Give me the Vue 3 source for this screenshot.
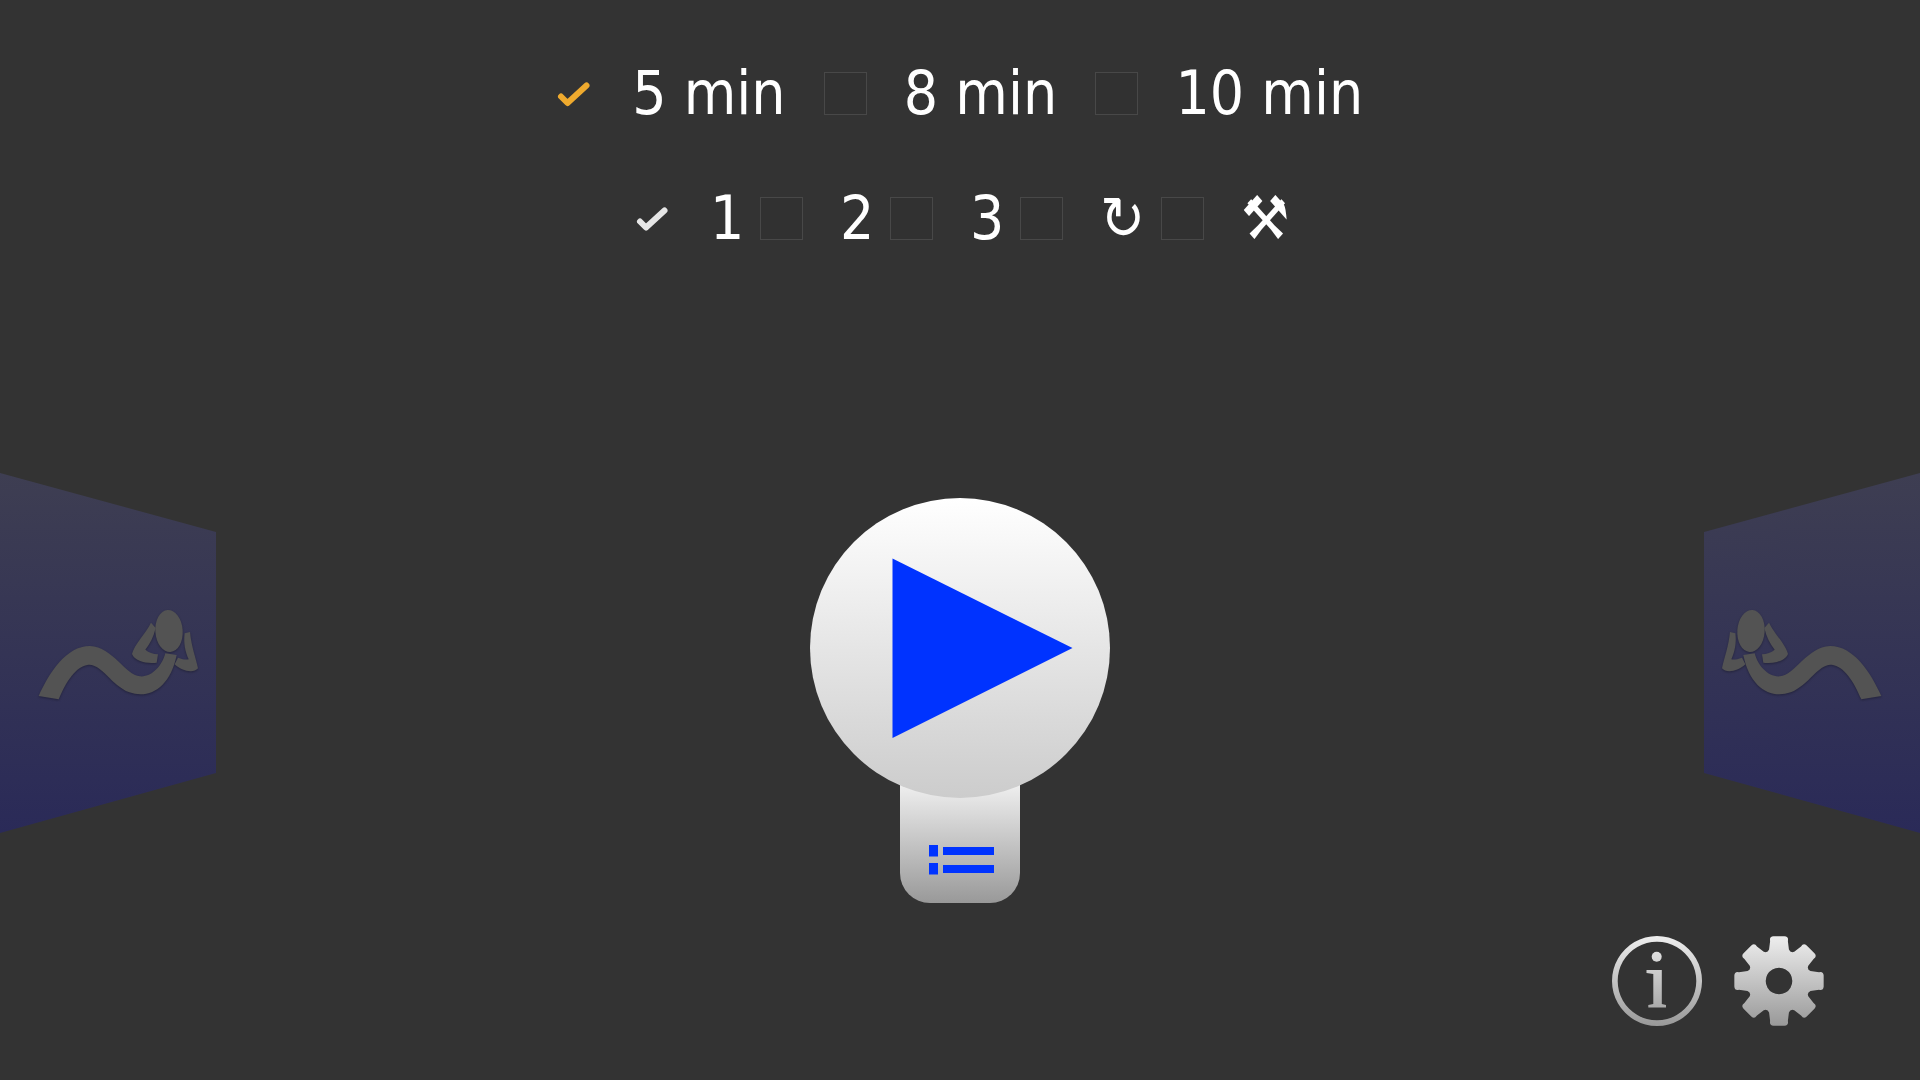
<template>
  <div class="screen">
    <div class="options">
      <div class="row row-time">
        <template v-for="t in times" :key="t.label">
          <span class="box" :class="{ checked: t.checked }">
            <svg v-if="t.checked" class="tick" viewBox="0 0 43 43"><path d="M9 24.5 L15.5 31 L34.5 13.5" fill="none" stroke="#efaa2e" stroke-width="6" stroke-linejoin="round" stroke-linecap="round" /></svg>
          </span>
          <span class="label">{{ t.label }}</span>
        </template>
      </div>
      <div class="row row-level">
        <template v-for="l in levels" :key="l.label">
          <span class="box" :class="{ checked: l.checked }">
            <svg v-if="l.checked" class="tick" viewBox="0 0 43 43"><path d="M10 24.5 L16 30.5 L34.5 13.5" fill="none" stroke="#e6e6e6" stroke-width="6" stroke-linejoin="round" stroke-linecap="round" /></svg>
          </span>
          <span class="label">{{ l.label }}</span>
        </template>
      </div>
    </div>

    <div class="stage">
      <div class="panel">
        <svg class="situp" viewBox="0 0 690 1140">
          <path :d="bodyPath" />
          <path :d="armLeft" />
          <path :d="armRight" />
          <ellipse cx="507" cy="513" rx="41" ry="63" transform="rotate(-4 507 513)" />
        </svg>
      </div>

      <div class="center">
        <button class="play">
          <svg width="300" height="300" viewBox="0 0 300 300"><polygon points="82.5,60.5 262.5,150 82.5,240" fill="#0033ff" /></svg>
        </button>
        <div class="tab">
          <svg width="66" height="30" viewBox="0 0 66 30">
            <g fill="#0033ff">
              <rect x="0" y="0" width="9" height="11.5" />
              <rect x="0" y="18" width="9" height="11.5" />
              <rect x="14" y="2" width="51" height="8" />
              <rect x="14" y="20" width="51" height="8" />
            </g>
          </svg>
        </div>
      </div>

      <div class="panel flipped">
        <svg class="situp" viewBox="0 0 690 1140">
          <path :d="bodyPath" />
          <path :d="armLeft" />
          <path :d="armRight" />
          <ellipse cx="507" cy="513" rx="41" ry="63" transform="rotate(-4 507 513)" />
        </svg>
      </div>
    </div>

    <div class="footer">
      <svg width="90" height="90" viewBox="0 0 90 90">
        <defs>
          <linearGradient id="infoGrad" x1="0" y1="0" x2="0" y2="90" gradientUnits="userSpaceOnUse">
            <stop offset="0" stop-color="#eeeeee" />
            <stop offset="1" stop-color="#999999" />
          </linearGradient>
        </defs>
        <path d="M45 0a45 45 0 1 0 0.01 0zM45 5.7a39.3 39.3 0 1 1 -0.01 0z" fill="url(#infoGrad)" fill-rule="evenodd" />
        <circle cx="44.7" cy="20.7" r="5" fill="url(#infoGrad)" />
        <path d="M34.5 34 H49.8 V68 L54 69 V71.5 H36.3 V69 L41.3 68 V38 L34.5 37 Z" fill="url(#infoGrad)" />
      </svg>
      <svg width="90" height="90" viewBox="0 0 90 90">
        <defs>
          <linearGradient id="gearGrad" x1="0" y1="0" x2="0" y2="90" gradientUnits="userSpaceOnUse">
            <stop offset="0" stop-color="#eeeeee" />
            <stop offset="1" stop-color="#999999" />
          </linearGradient>
        </defs>
        <path :d="gearPath" fill="url(#gearGrad)" fill-rule="evenodd" />
      </svg>
    </div>
  </div>
</template>

<script setup>
const times = [
  { label: '5 min', checked: true },
  { label: '8 min', checked: false },
  { label: '10 min', checked: false }
]

const levels = [
  { label: '1', checked: true },
  { label: '2', checked: false },
  { label: '3', checked: false },
  { label: '↻', checked: false },
  { label: '⚒', checked: false }
]

// figure traced in 3x coordinates of the side panel
const bodyPath = 'M116 708 L176 718 C198 665 228 618 265 614 C305 611 332 674 388 697 C448 718 510 684 530 585 L496 580 C486 618 455 652 420 649 C376 646 338 560 270 558 C198 558 148 638 116 708 Z'
const armLeft = 'M453 488 L467 504 C461 530 450 552 436 569 C446 578 460 582 474 583 L470 608 C440 612 405 604 396 582 C403 553 438 520 453 488 Z'
const armRight = 'M554 520 L570 516 C574 560 588 595 594 625 C580 642 543 632 524 613 L534 593 C548 598 558 600 566 598 C556 576 550 550 554 520 Z'

// 8 teeth around a centre hole
const gearPath = (() => {
  const c = 45
  const pt = (r, deg) => {
    const a = (deg - 90) * Math.PI / 180
    return `${(c + r * Math.cos(a)).toFixed(2)} ${(c + r * Math.sin(a)).toFixed(2)}`
  }
  let d = ''
  for (let i = 0; i < 8; i++) {
    const a = i * 45
    d += `${i ? 'Q' + pt(30, a - 22.5) + ' ' : 'M'}${pt(33, a - 17.5)} L${pt(41, a - 12.5)} Q${pt(45.5, a - 12.5)} ${pt(45, a - 7)} L${pt(45, a + 7)} Q${pt(45.5, a + 12.5)} ${pt(41, a + 12.5)} L${pt(33, a + 17.5)} `
  }
  d += `Q${pt(30, -22.5)} ${pt(33, -17.5)} Z `
  d += 'M45 31.7a13.3 13.3 0 1 0 0.01 0z'
  return d
})()
</script>

<style scoped>
.screen {
  width: 1920px;
  height: 1080px;
  overflow: hidden;
  background: #333333;
  font-family: "DejaVu Sans", Verdana, sans-serif;
  font-stretch: condensed;
  color: #ffffff;
}

.options {
  display: flex;
  flex-direction: column;
  align-items: flex-start;
  padding-top: 72px;
  gap: 82px;
}

.row {
  display: flex;
  align-items: center;
  height: 43px;
}

.row-time {
  margin-left: 552px;
}

.row-level {
  margin-left: 630px;
}

.box {
  box-sizing: border-box;
  width: 43px;
  height: 43px;
  flex: none;
  border: 1px solid #484848;
  background: #313131;
}

.box.checked {
  border: none;
  background: none;
}

.tick {
  display: block;
  width: 43px;
  height: 43px;
}

.label {
  font-size: 60px;
  line-height: 43px;
  white-space: pre;
}

.row-time .label {
  margin: 0 38.2px 0 37.2px;
}

.row-level .label {
  margin: 0 15.7px 0 37px;
}

.stage {
  display: flex;
  justify-content: space-between;
  align-items: flex-start;
  margin-top: 233px;
}

.panel {
  position: relative;
  width: 216px;
  height: 360px;
  background: linear-gradient(to bottom, #3e3e52, #2a2a58);
  clip-path: polygon(0 0, 100% 59px, 100% 300px, 0 100%);
}

.panel.flipped {
  transform: scaleX(-1);
}

.situp {
  position: absolute;
  left: 0;
  top: -13px;
  width: 230px;
  height: 380px;
  fill: #535353;
  filter: drop-shadow(0 1px 1px rgba(0, 0, 0, 0.3));
}

.center {
  display: flex;
  flex-direction: column;
  align-items: center;
  margin-top: 25px;
}

.play {
  position: relative;
  z-index: 1;
  width: 300px;
  height: 300px;
  padding: 0;
  border: none;
  border-radius: 50%;
  background: linear-gradient(to bottom, #ffffff, #cccccc);
}

.play svg {
  display: block;
}

.tab {
  box-sizing: border-box;
  display: flex;
  align-items: flex-end;
  justify-content: center;
  width: 120px;
  height: 123px;
  margin-top: -18px;
  padding: 0 0 28px 3px;
  border-radius: 0 0 30px 30px;
  background: linear-gradient(to bottom, #f2f2f2, #999999);
}

.tab svg {
  display: block;
}

.footer {
  display: flex;
  justify-content: flex-end;
  gap: 32px;
  margin-top: 33px;
  padding-right: 96px;
}
</style>

<style>
body {
  background: #333333;
}
</style>
